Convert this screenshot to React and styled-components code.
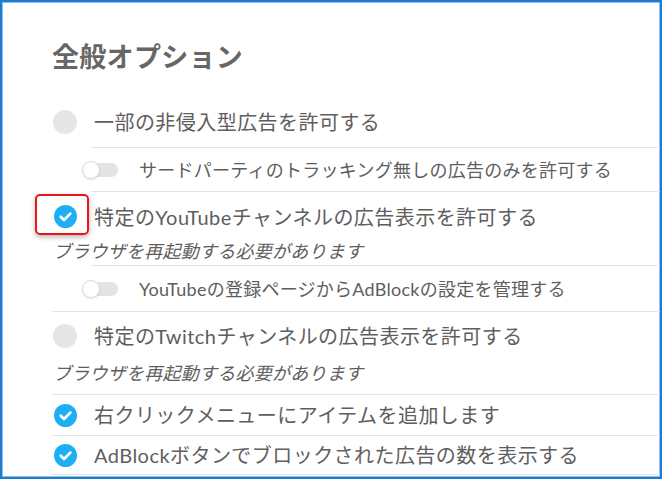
import styled, { createGlobalStyle } from "styled-components";

const GlobalStyle = createGlobalStyle`
  html, body {
    margin: 0;
    padding: 0;
    background: #fff;
  }
  body {
    font-family: Lato, "Noto Sans CJK JP", sans-serif;
  }
`;

const Frame = styled.div`
  box-sizing: border-box;
  width: 662px;
  height: 479px;
  border: 2px solid #1c7cd0;
  box-shadow: inset 0 0 0 1px #8fc0ea;
  padding: 38px 0 0 50px;
  overflow: hidden;
  color: #5e5e5e;
`;

const Title = styled.h2`
  margin: 0 0 23px;
  font-size: 27px;
  line-height: 34px;
  font-weight: 700;
  letter-spacing: 0.3px;
  color: #666;
`;

const Row = styled.div`
  display: flex;
  align-items: center;
  gap: 17px;
  height: ${(p) => p.$h}px;
  padding-left: 1px;
  font-size: 20px;
  line-height: 24px;
  letter-spacing: 0.45px;
  white-space: nowrap;
`;

const SubRow = styled.div`
  display: flex;
  align-items: center;
  gap: 21px;
  height: ${(p) => p.$h}px;
  padding-left: 30px;
  font-size: 18px;
  line-height: 22px;
  letter-spacing: 0.25px;
  white-space: nowrap;
`;

const Note = styled.div`
  padding-left: 1px;
  margin: ${(p) => p.$mt || 0}px 0 ${(p) => p.$mb || 0}px;
  font-size: 18px;
  line-height: 20px;
  font-style: italic;
  letter-spacing: 0.25px;
  white-space: nowrap;
`;

const Rule = styled.div`
  height: 1px;
  background: #e3e3e3;
  margin-left: ${(p) => p.$indent || 0}px;
`;

const Mark = styled.span`
  position: relative;
  flex: none;
  display: flex;
  align-items: center;
  justify-content: center;
  width: 24px;
  height: 24px;
`;

const Dot = styled.span`
  width: 24px;
  height: 24px;
  border-radius: 50%;
  background: #e6e6e6;
`;

// red annotation box drawn over the checkbox in the screenshot
const Highlight = styled.span`
  position: absolute;
  left: -18px;
  top: -11px;
  width: 54px;
  height: 41px;
  box-sizing: border-box;
  border: 2px solid #e8151b;
  border-radius: 5px;
  box-shadow: 0 2px 5px rgba(0, 0, 0, 0.3);
`;

const Track = styled.span`
  position: relative;
  flex: none;
  width: 30px;
  height: 14px;
  margin-left: 6px;
  border-radius: 7px;
  background: #e4e4e4;
`;

const Knob = styled.span`
  position: absolute;
  left: -6px;
  top: -2px;
  width: 18px;
  height: 18px;
  box-sizing: border-box;
  border-radius: 50%;
  background: #fff;
  border: 1px solid #dedede;
  box-shadow: 0 1px 2px rgba(0, 0, 0, 0.12);
`;

const Check = () => (
  <svg width="23" height="23" viewBox="0 0 22 22">
    <circle cx="11" cy="11" r="11" fill="#1eaff2" />
    <path
      d="M6.4 11.3l3.2 3.1 6-6.2"
      fill="none"
      stroke="#fff"
      strokeWidth="2.6"
      strokeLinecap="round"
      strokeLinejoin="round"
    />
  </svg>
);

const Indicator = ({ checked, marked }) => (
  <Mark>
    {checked ? <Check /> : <Dot />}
    {marked && <Highlight />}
  </Mark>
);

const Toggle = () => (
  <Track>
    <Knob />
  </Track>
);

const restartNote = "ブラウザを再起動する必要があります";

const App = () => {
  return (
    <>
      <GlobalStyle />
      <Frame>
        <Title>全般オプション</Title>

        <Row $h={50}>
          <Indicator />
          一部の非侵入型広告を許可する
        </Row>
        <Rule $indent={39} />
        <SubRow $h={43}>
          <Toggle />
          サードパーティのトラッキング無しの広告のみを許可する
        </SubRow>
        <Rule $indent={39} />

        <Row $h={49}>
          <Indicator checked marked />
          特定のYouTubeチャンネルの広告表示を許可する
        </Row>
        <Note $mb={4}>{restartNote}</Note>
        <Rule $indent={39} />
        <SubRow $h={45}>
          <Toggle />
          YouTubeの登録ページからAdBlockの設定を管理する
        </SubRow>
        <Rule />

        <Row $h={48}>
          <Indicator />
          特定のTwitchチャンネルの広告表示を許可する
        </Row>
        <Note $mt={3} $mb={11}>{restartNote}</Note>
        <Rule />

        <Row $h={40}>
          <Indicator checked />
          右クリックメニューにアイテムを追加します
        </Row>
        <Rule />

        <Row $h={38}>
          <Indicator checked />
          AdBlockボタンでブロックされた広告の数を表示する
        </Row>
        <Rule />
      </Frame>
    </>
  );
};

export default App;
